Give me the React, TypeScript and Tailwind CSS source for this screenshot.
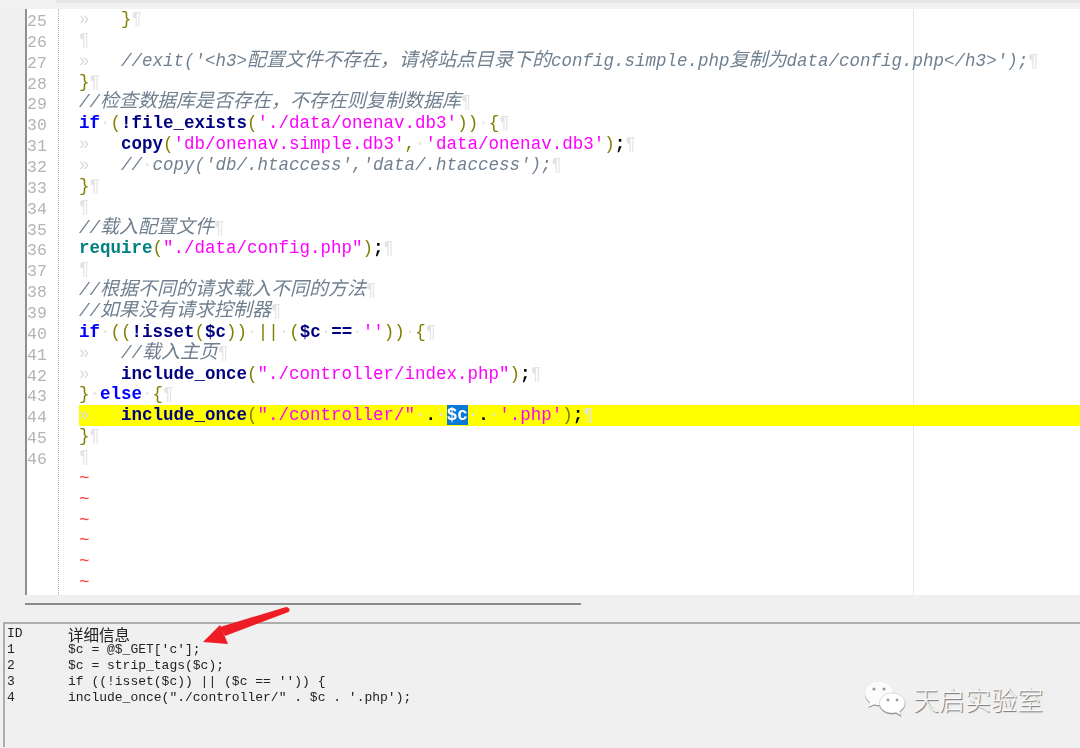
import React from 'react';

type Tok = [string, string];

const styles: Record<string, string> = {
    k: 'text-[#0000ff] font-bold',
    f: 'text-[#000080] font-bold',
    t: 'text-[#008080] font-bold',
    s: 'text-[#ff00ff]',
    p: 'text-[#808000]',
    e: 'text-black font-bold',
    c: 'text-[#708090] italic',
    h: 'text-[#708090] italic text-[19px] leading-[0] font-["Noto_Sans_CJK_SC",sans-serif]',
    w: 'text-[#e4e4e4]',
};

const sp: Tok = ['w', '·'];
const tab = (
    <span className="inline-block w-[42px] text-[#dcdcdc]">»</span>
);

const rows: { tab?: boolean; toks: Tok[]; active?: boolean }[] = [
    { tab: true, toks: [['p', '}']] },
    { toks: [] },
    { tab: true, toks: [['c', "//exit('<h3>"], ['h', '配置文件不存在，请将站点目录下的'], ['c', 'config.simple.php'], ['h', '复制为'], ['c', "data/config.php</h3>');"]] },
    { toks: [['p', '}']] },
    { toks: [['c', '//'], ['h', '检查数据库是否存在，不存在则复制数据库']] },
    { toks: [['k', 'if'], sp, ['p', '('], ['f', '!file_exists'], ['p', '('], ['s', "'./data/onenav.db3'"], ['p', '))'], sp, ['p', '{']] },
    { tab: true, toks: [['f', 'copy'], ['p', '('], ['s', "'db/onenav.simple.db3'"], ['p', ','], sp, ['s', "'data/onenav.db3'"], ['p', ')'], ['e', ';']] },
    { tab: true, toks: [['c', '//'], sp, ['c', "copy('db/.htaccess','data/.htaccess');"]] },
    { toks: [['p', '}']] },
    { toks: [] },
    { toks: [['c', '//'], ['h', '载入配置文件']] },
    { toks: [['t', 'require'], ['p', '('], ['s', '"./data/config.php"'], ['p', ')'], ['e', ';']] },
    { toks: [] },
    { toks: [['c', '//'], ['h', '根据不同的请求载入不同的方法']] },
    { toks: [['c', '//'], ['h', '如果没有请求控制器']] },
    { toks: [['k', 'if'], sp, ['p', '(('], ['f', '!isset'], ['p', '('], ['f', '$c'], ['p', '))'], sp, ['p', '||'], sp, ['p', '('], ['f', '$c'], sp, ['f', '=='], sp, ['s', "''"], ['p', '))'], sp, ['p', '{']] },
    { tab: true, toks: [['c', '//'], ['h', '载入主页']] },
    { tab: true, toks: [['f', 'include_once'], ['p', '('], ['s', '"./controller/index.php"'], ['p', ')'], ['e', ';']] },
    { toks: [['p', '}'], sp, ['k', 'else'], sp, ['p', '{']] },
    { tab: true, active: true, toks: [['f', 'include_once'], ['p', '('], ['s', '"./controller/"'], sp, ['e', '.'], sp, ['x', '$c'], sp, ['e', '.'], sp, ['s', "'.php'"], ['p', ')'], ['e', ';']] },
    { toks: [['p', '}']] },
    { toks: [] },
];

const details = [
    ['ID', '详细信息'],
    ['1', "$c = @$_GET['c'];"],
    ['2', '$c = strip_tags($c);'],
    ['3', "if ((!isset($c)) || ($c == '')) {"],
    ['4', 'include_once("./controller/" . $c . \'.php\');'],
];

function CodeRow({ row }: { row: (typeof rows)[number] }) {
    return (
        <div className={`h-[20.86px] leading-[20.86px] whitespace-pre ${row.active ? 'bg-[#ffff00]' : ''}`}>
            {row.tab && tab}
            {row.toks.map(([kind, text], i) =>
                kind === 'x' ? (
                    <span key={i} className="bg-[#0a78d7] text-[#ffffff] font-bold">{text}</span>
                ) : (
                    <span key={i} className={styles[kind]}>{text}</span>
                )
            )}
            <span className="text-[#e4e4e4]">¶</span>
        </div>
    );
}

export default function App() {
    return (
        <div className="relative w-[1080px] h-[748px] overflow-hidden bg-[#f0f0f0] font-['Liberation_Mono',monospace]">
            <div className="h-[9px] bg-[#f2f2f2]">
                <div className="ml-[56px] h-[3px] bg-[#e6e6e6]"></div>
            </div>

            <div className="flex h-[586px] overflow-hidden blur-[0.5px]">
                <div className="w-[25px] shrink-0 bg-[#f0f0f0] border-r-2 border-[#8f8f8f] box-content"></div>
                <div className="w-[31px] shrink-0 bg-white pt-[3px] text-[16.5px] text-[#b4b4b4]">
                    {rows.map((_, i) => (
                        <div key={i} className="h-[20.86px] leading-[20.86px]">{i + 25}</div>
                    ))}
                </div>
                <div className="w-[20px] shrink-0 bg-white border-l border-dotted border-[#b0b0b0]"></div>
                <div className="relative flex-1 bg-white text-[17.5px] pl-[1px]">
                    <div className="absolute top-0 bottom-0 left-[835px] w-px bg-[#e6e6e6]"></div>
                    <div className="relative">
                        {rows.map((row, i) => (
                            <CodeRow key={i} row={row} />
                        ))}
                        {[0, 1, 2, 3, 4, 5].map((i) => (
                            <div key={i} className="h-[20.86px] leading-[20.86px] text-[#ff4040]">~</div>
                        ))}
                    </div>
                </div>
            </div>

            <div className="ml-[25px] mt-[8px] w-[556px] h-[2px] bg-[#8a8a8a]"></div>

            <div className="ml-[3px] mt-[17px] h-[125px] border-t-2 border-l-2 border-[#adadad] pt-[2px] pl-[2px] text-[13px] text-[#222222] blur-[0.3px]">
                {details.map(([id, text]) => (
                    <div key={id} className="flex h-[16px] leading-[16px] whitespace-pre">
                        <span className="w-[61px] shrink-0">{id}</span>
                        <span className={id === 'ID' ? "text-[15.5px] leading-[16px] font-['Noto_Sans_CJK_SC',sans-serif]" : ''}>{text}</span>
                    </div>
                ))}
            </div>

            {/* red arrow */}
            <svg className="absolute left-[195px] top-[600px]" width="105" height="50" viewBox="0 0 105 50">
                <path d="M93 7.500 Q96 10 93.500 12 L30 36 L25 27 L91 7 Z" fill="#ee1c25" />
                <path d="M8 42 L25 25 L33 44 Z" fill="#ee1c25" />
            </svg>

            {/* watermark */}
            <div className="absolute left-[864px] top-[680px] flex items-center gap-[7px]">
                <svg width="42" height="38" viewBox="0 0 42 38" className="drop-shadow-[0.5px_1px_0.5px_rgba(0,0,0,0.45)]">
                    <path d="M15 2 C7 2 1 7 1 13.500 C1 17.500 3.500 20.500 6 22.500 L4.500 27 L10 24.500 C12 25 13.500 25.300 15 25.300 C23 25.300 29 20 29 13.500 C29 7 23 2 15 2 Z" fill="#fbfbfb" />
                    <path d="M28 13 C21 13 15.500 17.500 15.500 23 C15.500 28.500 21 33 28 33 C29.500 33 30.500 32.800 32 32.400 L37 35.500 L35.800 31 C39 29 41 26 41 23 C41 17.500 35 13 28 13 Z" fill="#ffffff" stroke="#c8c8c8" strokeWidth="0.6" />
                    <circle cx="10" cy="9" r="1.600" fill="#9a9a9a" />
                    <circle cx="20" cy="9" r="1.600" fill="#9a9a9a" />
                    <circle cx="24" cy="20" r="1.400" fill="#9a9a9a" />
                    <circle cx="33" cy="20" r="1.400" fill="#9a9a9a" />
                </svg>
                <span className="text-[26px] leading-none text-[#fafafa] font-['Noto_Sans_CJK_SC',sans-serif] font-light [text-shadow:1px_1px_1px_rgba(0,0,0,0.55)]">天启实验室</span>
            </div>
        </div>
    );
}
